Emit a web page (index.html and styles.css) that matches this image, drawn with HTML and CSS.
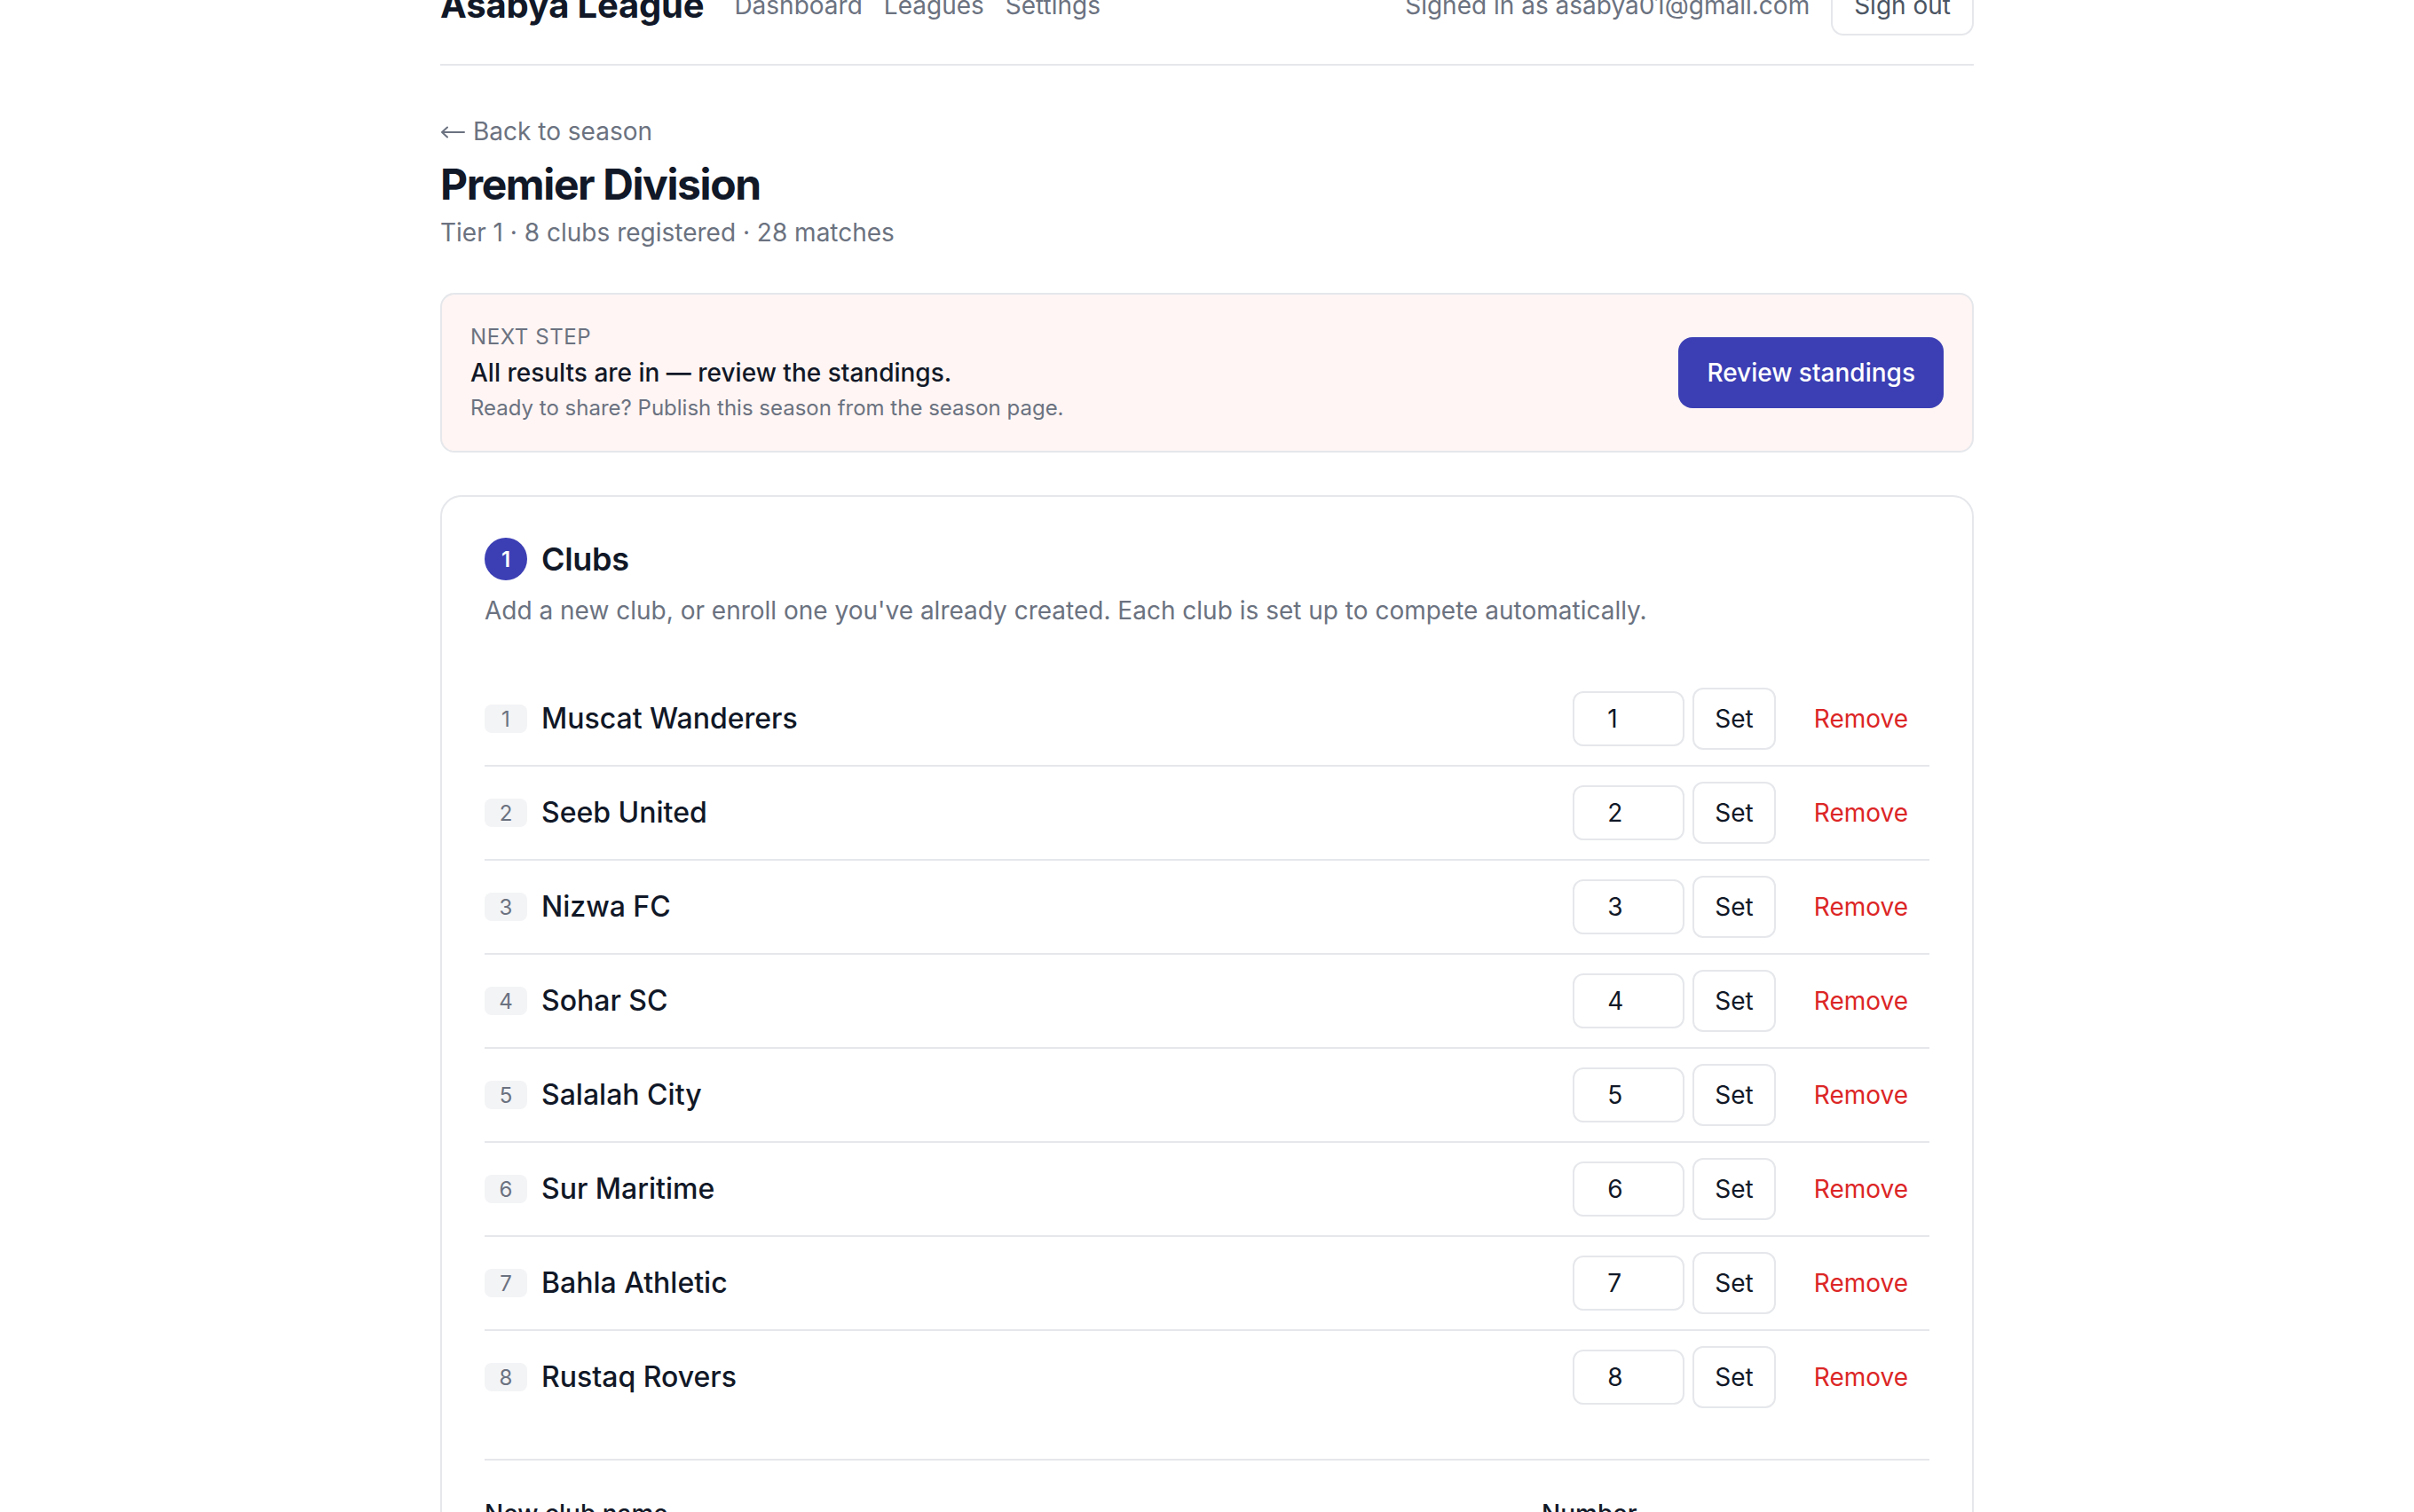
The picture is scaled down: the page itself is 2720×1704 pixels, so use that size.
FILE: index.html
```html
<!DOCTYPE html>
<html lang="en">
<head>
  <meta charset="UTF-8" />
  <meta name="viewport" content="width=device-width, initial-scale=1" />
  <title>Premier Division · Asabya League</title>
  <link rel="stylesheet" href="styles.css">
</head>
<body>
  <div class="shell">
    <header class="topbar">
      <div class="topbar-left">
        <span class="brand">Asabya League</span>
        <nav class="nav">
          <a href="#">Dashboard</a>
          <a href="#">Leagues</a>
          <a href="#">Settings</a>
        </nav>
      </div>
      <div class="topbar-right">
        <span class="who">Signed in as asabya01@gmail.com</span>
        <button class="btn-outline">Sign out</button>
      </div>
    </header>

    <main class="main">
      <a class="back" href="#">
        <svg class="arrow" width="28" height="14" viewBox="0 0 28 14" fill="none" stroke="currentColor" stroke-width="2" stroke-linecap="round" stroke-linejoin="round"><path d="M27 7H2M8 1.5L2 7l6 5.5"/></svg>
        Back to season
      </a>
      <h1 class="title">Premier Division</h1>
      <p class="meta">Tier 1 · 8 clubs registered · 28 matches</p>

      <div class="next-step">
        <div>
          <div class="next-label">Next step</div>
          <div class="next-title">All results are in — review the standings.</div>
          <div class="next-hint">Ready to share? Publish this season from the season page.</div>
        </div>
        <button class="btn-primary">Review standings</button>
      </div>

      <section class="card">
        <div class="card-head">
          <span class="step">1</span>
          <h2>Clubs</h2>
        </div>
        <p class="card-desc">Add a new club, or enroll one you've already created. Each club is set up to compete automatically.</p>

        <div class="club-list">
          <div class="club-row">
            <div class="club-info"><span class="seed">1</span><span class="club-name">Muscat Wanderers</span></div>
            <div class="club-actions"><input class="num-input" type="text" value="1"><button class="btn-set">Set</button><button class="btn-remove">Remove</button></div>
          </div>
          <div class="club-row">
            <div class="club-info"><span class="seed">2</span><span class="club-name">Seeb United</span></div>
            <div class="club-actions"><input class="num-input" type="text" value="2"><button class="btn-set">Set</button><button class="btn-remove">Remove</button></div>
          </div>
          <div class="club-row">
            <div class="club-info"><span class="seed">3</span><span class="club-name">Nizwa FC</span></div>
            <div class="club-actions"><input class="num-input" type="text" value="3"><button class="btn-set">Set</button><button class="btn-remove">Remove</button></div>
          </div>
          <div class="club-row">
            <div class="club-info"><span class="seed">4</span><span class="club-name">Sohar SC</span></div>
            <div class="club-actions"><input class="num-input" type="text" value="4"><button class="btn-set">Set</button><button class="btn-remove">Remove</button></div>
          </div>
          <div class="club-row">
            <div class="club-info"><span class="seed">5</span><span class="club-name">Salalah City</span></div>
            <div class="club-actions"><input class="num-input" type="text" value="5"><button class="btn-set">Set</button><button class="btn-remove">Remove</button></div>
          </div>
          <div class="club-row">
            <div class="club-info"><span class="seed">6</span><span class="club-name">Sur Maritime</span></div>
            <div class="club-actions"><input class="num-input" type="text" value="6"><button class="btn-set">Set</button><button class="btn-remove">Remove</button></div>
          </div>
          <div class="club-row">
            <div class="club-info"><span class="seed">7</span><span class="club-name">Bahla Athletic</span></div>
            <div class="club-actions"><input class="num-input" type="text" value="7"><button class="btn-set">Set</button><button class="btn-remove">Remove</button></div>
          </div>
          <div class="club-row">
            <div class="club-info"><span class="seed">8</span><span class="club-name">Rustaq Rovers</span></div>
            <div class="club-actions"><input class="num-input" type="text" value="8"><button class="btn-set">Set</button><button class="btn-remove">Remove</button></div>
          </div>
        </div>

        <form class="add-form">
          <label class="field field-name">
            <span>New club name</span>
            <input type="text">
          </label>
          <label class="field field-num">
            <span>Number</span>
            <input type="text">
          </label>
          <button type="button" class="btn-primary btn-add">Add club</button>
        </form>
      </section>
    </main>
  </div>
</body>
</html>
```

FILE: styles.css
```css
body {
  margin: 0;
  font-family: Inter, "Noto Sans", sans-serif;
  background: #fff;
  color: #111827;
}
.shell {
  max-width: 1728px;
  margin: -60px auto 0;
}
.topbar {
  display: flex;
  justify-content: space-between;
  align-items: center;
  padding: 32px 0;
  border-bottom: 2px solid #e5e7eb;
}
.topbar-left, .topbar-right {
  display: flex;
  align-items: center;
}
.brand {
  font-size: 40px;
  line-height: 56px;
  font-weight: 700;
  letter-spacing: -0.2px;
}
.nav {
  display: flex;
  gap: 24px;
  margin-left: 34px;
}
.nav a {
  font-size: 28px;
  line-height: 40px;
  color: #6b7280;
  text-decoration: none;
}
.topbar-right {
  gap: 24px;
}
.who {
  font-size: 28px;
  line-height: 40px;
  color: #6b7280;
}
.btn-outline {
  font-family: inherit;
  font-size: 28px;
  line-height: 40px;
  color: #4b5563;
  background: #fff;
  border: 2px solid #e5e7eb;
  border-radius: 14px;
  padding: 12px 24px;
}
.main {
  padding-top: 54px;
}
.back {
  display: flex;
  align-items: center;
  gap: 9px;
  font-size: 28px;
  line-height: 40px;
  color: #6b7280;
  text-decoration: none;
}
.back .arrow {
  margin-top: 2px;
}
.title {
  margin: 8px 0 2px;
  font-size: 48px;
  line-height: 64px;
  font-weight: 700;
  letter-spacing: -1.4px;
}
.meta {
  margin: 0;
  font-size: 28px;
  line-height: 40px;
  color: #6b7280;
}
.next-step {
  margin-top: 48px;
  display: flex;
  justify-content: space-between;
  align-items: center;
  padding: 32px;
  background: #fef5f4;
  border: 2px solid #e5e7eb;
  border-radius: 16px;
}
.next-label {
  font-size: 24px;
  line-height: 32px;
  text-transform: uppercase;
  letter-spacing: 0.6px;
  color: #6b7280;
}
.next-title {
  margin-top: 4px;
  font-size: 28px;
  line-height: 40px;
  font-weight: 500;
}
.next-hint {
  margin-top: 4px;
  font-size: 24px;
  line-height: 32px;
  color: #6b7280;
}
.btn-primary {
  font-family: inherit;
  font-size: 28px;
  line-height: 40px;
  font-weight: 500;
  color: #fff;
  background: #3c3fb4;
  border: none;
  border-radius: 16px;
  padding: 20px 32px;
}
.card {
  margin-top: 48px;
  border: 2px solid #e5e7eb;
  border-radius: 24px;
  padding: 46px 48px 48px;
  background: #fff;
}
.card-head {
  display: flex;
  align-items: center;
  gap: 16px;
}
.step {
  width: 48px;
  height: 48px;
  border-radius: 50%;
  background: #3c3fb4;
  color: #fff;
  font-size: 24px;
  font-weight: 600;
  display: flex;
  align-items: center;
  justify-content: center;
}
.card-head h2 {
  margin: 0;
  font-size: 36px;
  line-height: 48px;
  font-weight: 600;
  letter-spacing: -0.3px;
}
.card-desc {
  margin: 14px 0 0;
  font-size: 28px;
  line-height: 40px;
  color: #6b7280;
}
.club-list {
  margin-top: 50px;
}
.club-row {
  display: flex;
  justify-content: space-between;
  align-items: center;
  padding: 17px 0;
  border-bottom: 2px solid #e5e7eb;
}
.club-row:last-child {
  border-bottom: none;
}
.club-info {
  display: flex;
  align-items: center;
  gap: 16px;
}
.seed {
  width: 48px;
  height: 32px;
  border-radius: 8px;
  background: #f3f4f6;
  color: #6b7280;
  font-size: 24px;
  display: flex;
  align-items: center;
  justify-content: center;
}
.club-name {
  font-size: 32px;
  line-height: 48px;
  font-weight: 500;
}
.club-actions {
  display: flex;
  align-items: center;
}
.num-input {
  box-sizing: border-box;
  width: 126px;
  height: 62px;
  padding: 0 0 0 37px;
  font-family: inherit;
  font-size: 28px;
  color: #111827;
  border: 2px solid #e5e7eb;
  border-radius: 12px;
  outline: none;
}
.btn-set {
  margin-left: 9px;
  font-family: inherit;
  font-size: 28px;
  line-height: 40px;
  color: #111827;
  background: #fff;
  border: 2px solid #e5e7eb;
  border-radius: 12px;
  padding: 13px 23px;
}
.btn-remove {
  margin-left: 19px;
  font-family: inherit;
  font-size: 28px;
  line-height: 40px;
  color: #dc2626;
  background: none;
  border: none;
  padding: 0 24px;
}
.add-form {
  margin-top: 40px;
  padding-top: 40px;
  border-top: 2px solid #e5e7eb;
  display: flex;
  align-items: flex-end;
  gap: 16px;
}
.field {
  display: flex;
  flex-direction: column;
  gap: 8px;
}
.field span {
  font-size: 28px;
  line-height: 40px;
  font-weight: 500;
}
.field input {
  box-sizing: border-box;
  height: 72px;
  border: 2px solid #e5e7eb;
  border-radius: 12px;
  font-family: inherit;
  font-size: 28px;
  padding: 0 24px;
}
.field-name {
  flex: 1;
}
.field-num {
  width: 200px;
}
.btn-add {
  width: 221px;
}
```
